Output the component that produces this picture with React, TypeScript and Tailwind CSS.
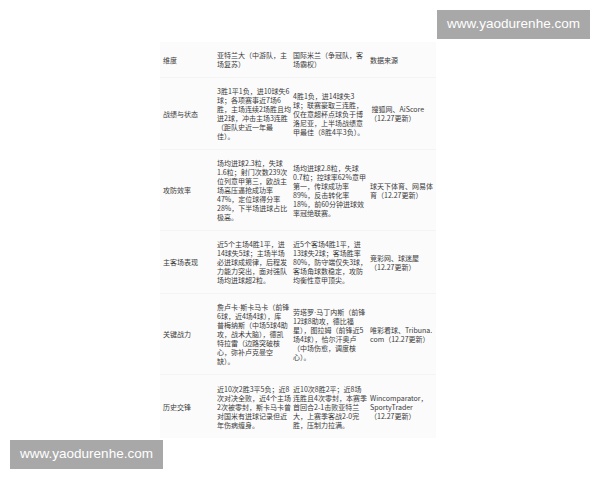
import React from "react";

type Row = { dim: string; a: string[]; b: string[]; src: string[] };

const header: Row = {
  dim: "维度",
  a: ["亚特兰大（中游队，主", "场复苏）"],
  b: ["国际米兰（争冠队，客", "场霸权）"],
  src: ["数据来源"],
};

const rows: Row[] = [
  {
    dim: "战绩与状态",
    a: ["3胜1平1负，进10球失6", "球；各项赛事近7场6", "胜，主场连续2场胜且均", "进2球，冲击主场3连胜", "（距队史近一年最", "佳）。"],
    b: ["4胜1负，进14球失3", "球；联赛豪取三连胜，", "仅在意超杯点球负于博", "洛尼亚，上半场战绩意", "甲最佳（8胜4平3负）。"],
    src: [" 搜狐网、AiScore", "（12.27更新）"],
  },
  {
    dim: "攻防效率",
    a: ["场均进球2.3粒，失球", "1.6粒；射门次数239次", "位列意甲第三，欧战主", "场高压逼抢成功率", "47%，定位球得分率", "28%，下半场进球占比", "极高。"],
    b: ["场均进球2.8粒，失球", "0.7粒；控球率62%意甲", "第一，传球成功率", "89%，反击转化率", "18%，前60分钟进球效", "率冠绝联赛。"],
    src: ["球天下体育、网易体", "育（12.27更新）"],
  },
  {
    dim: "主客场表现",
    a: ["近5个主场4胜1平，进", "14球失5球；主场半场", "必进球成规律，后程发", "力能力突出，面对强队", "场均进球超2粒。"],
    b: ["近5个客场4胜1平，进", "13球失2球；客场胜率", "80%，防守端仅失3球，", "客场角球数稳定，攻防", "均衡性意甲顶尖。"],
    src: ["竞彩网、球迷屋", "（12.27更新）"],
  },
  {
    dim: "关键战力",
    a: ["詹卢卡·斯卡马卡（前锋", "6球，近4场4球），库", "普梅纳斯（中场5球4助", "攻，战术大脑），德凯", "特拉雷（边路突破核", "心，弥补卢克曼空", "缺）。"],
    b: ["劳塔罗·马丁内斯（前锋", "12球8助攻，德比福", "星），图拉姆（前锋近5", "场4球），恰尔汗奥卢", "（中场伤愈，调度核", "心）。"],
    src: ["唯彩看球、Tribuna.", "com（12.27更新）"],
  },
  {
    dim: "历史交锋",
    a: ["近10次2胜3平5负；近8", "次对决全败，近4个主场", "2次被零封，斯卡马卡曾", "对国米有进球记录但近", "年伤病缠身。"],
    b: ["近10次8胜2平；近8场", "连胜且4次零封，本赛季", "首回合2-1击败亚特兰", "大，上赛季客战2-0完", "胜，压制力拉满。"],
    src: ["Wincomparator，", "SportyTrader", "（12.27更新）"],
  },
];

function Line({ text }: { text: string }) {
  const parts = text.split("·");
  return (
    <span className="whitespace-pre block h-[9px] leading-[9px]">
      {parts.map((p, i) => (
        <React.Fragment key={i}>
          {i > 0 && (
            <span style={{ fontFamily: '"Liberation Sans", sans-serif' }}>·</span>
          )}
          {p}
        </React.Fragment>
      ))}
    </span>
  );
}

function Lines({ lines }: { lines: string[] }) {
  return (
    <div className="flex flex-col">
      {lines.map((l, i) => (
        <Line key={i} text={l} />
      ))}
    </div>
  );
}

function TableRow({ r, last }: { r: Row; last?: boolean }) {
  return (
    <div
      className={
        "grid grid-cols-[54px_76px_77px_69px] items-center " +
        (last ? "pt-[10px] pb-[8px]" : "pt-[9px] pb-[8px] border-b border-[#f4f4f4]")
      }
    >
      <div className="pl-[3px]">
        <Lines lines={[r.dim]} />
      </div>
      <div className="pl-[3px]">
        <Lines lines={r.a} />
      </div>
      <div className="pl-[3px]">
        <Lines lines={r.b} />
      </div>
      <div className="pl-[3px]">
        <Lines lines={r.src} />
      </div>
    </div>
  );
}

export default function App() {
  return (
    <div className="relative w-[600px] h-[480px] overflow-hidden bg-white">
      <div className="pt-[42px] pl-[160px]">
        <div
          className="w-[276px] bg-[#fbfbfb] text-[#3a3a3a] text-[7px] leading-[9px]"
          style={{ fontFamily: '"Noto Sans CJK SC", "Noto Sans", sans-serif' }}
        >
          <TableRow r={header} />
          {rows.map((r, i) => (
            <TableRow key={i} r={r} last={i === rows.length - 1} />
          ))}
        </div>
      </div>
      <div
        className="absolute left-[437px] top-[10px] w-[153px] h-[29px] bg-[#a8a8a8] text-white text-[13.5px] flex items-center justify-center"
        style={{ fontFamily: '"Liberation Sans", Arial, sans-serif' }}
      >
        www.yaodurenhe.com
      </div>
      <div
        className="absolute left-[10px] top-[440px] w-[153px] h-[29px] bg-[#a8a8a8] text-white text-[13.5px] flex items-center justify-center"
        style={{ fontFamily: '"Liberation Sans", Arial, sans-serif' }}
      >
        www.yaodurenhe.com
      </div>
    </div>
  );
}
